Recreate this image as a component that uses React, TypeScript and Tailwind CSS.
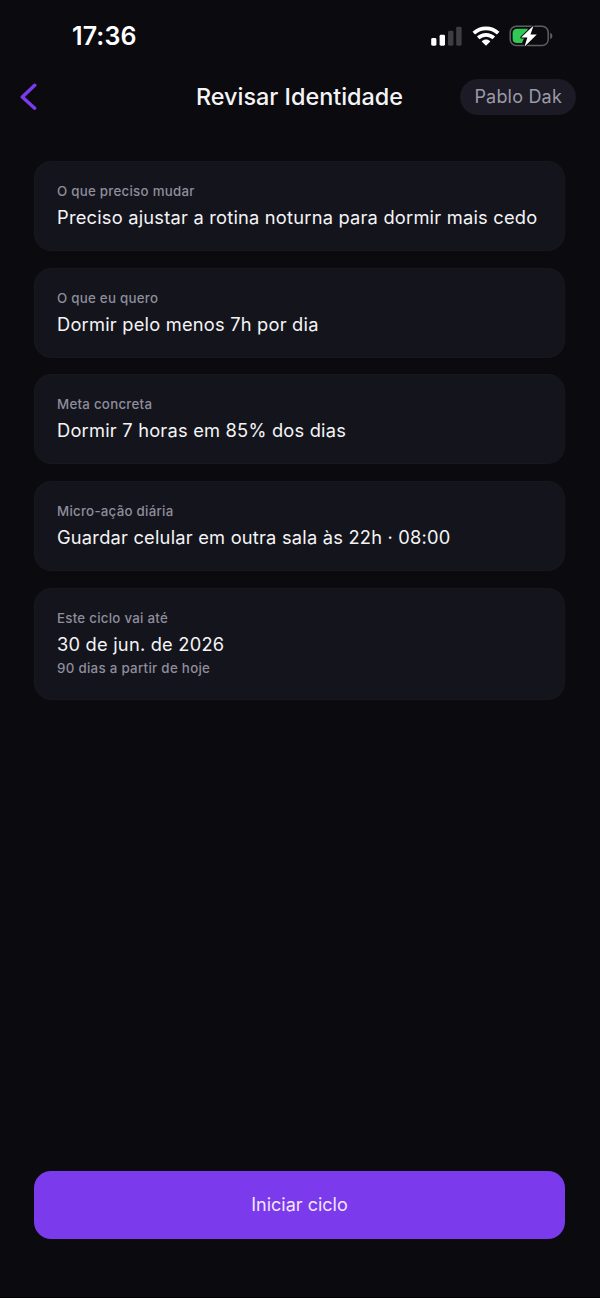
interface ReviewItem {
  label: string;
  value: string;
  hint?: string;
}

const ITEMS: ReviewItem[] = [
  { label: 'O que preciso mudar', value: 'Preciso ajustar a rotina noturna para dormir mais cedo' },
  { label: 'O que eu quero', value: 'Dormir pelo menos 7h por dia' },
  { label: 'Meta concreta', value: 'Dormir 7 horas em 85% dos dias' },
  { label: 'Micro-ação diária', value: 'Guardar celular em outra sala às 22h · 08:00' },
  { label: 'Este ciclo vai até', value: '30 de jun. de 2026', hint: '90 dias a partir de hoje' },
];

function SignalIcon() {
  return (
    <svg width="32" height="20" viewBox="0 0 32 20">
      <rect x="0.2" y="12" width="5.2" height="7.7" rx="1.4" fill="#fff" />
      <rect x="8.6" y="8.8" width="5.4" height="10.9" rx="1.4" fill="#fff" />
      <rect x="17" y="4.8" width="5.4" height="14.9" rx="1.4" fill="#3e3e42" />
      <rect x="25.2" y="0.8" width="5.4" height="18.9" rx="1.4" fill="#3e3e42" />
    </svg>
  );
}

function WifiIcon() {
  return (
    <svg width="28" height="20" viewBox="0 0 28 20" fill="none" stroke="#fff" strokeWidth="3.7">
      <path d="M1.8 7.2C8.7 0.7 19.3 0.7 26.2 7.2" />
      <path d="M6.2 11.9C10.6 7.8 17.4 7.8 21.8 11.9" />
      <path d="M14 19.7L9.7 15.4C12.2 13 15.8 13 18.3 15.4Z" fill="#fff" stroke="none" />
    </svg>
  );
}

function BatteryIcon() {
  return (
    <svg width="44" height="24" viewBox="0 0 44 24">
      <rect x="1.2" y="2.2" width="38" height="19.4" rx="6.2" fill="none" stroke="#606064" strokeWidth="1.5" />
      <path d="M8.2 4.7H19L13 19.1H8.2Q3.6 19.1 3.6 14.5V9.3Q3.6 4.7 8.2 4.7Z" fill="#31c956" />
      <path d="M41.2 8.7C44 9.7 44 14.1 41.2 15.1Z" fill="#606064" />
      <path
        d="M24.6 1.4L12.2 13.5H18.4L15.4 22.8L27.8 10.5H21.5Z"
        fill="#fff"
        stroke="#0a0a0f"
        strokeWidth="1.8"
        strokeLinejoin="round"
        paintOrder="stroke"
      />
    </svg>
  );
}

function StatusBar() {
  return (
    <div className="flex h-[72px] shrink-0 items-center justify-between pr-[47px] pl-[72px]">
      <span className="pt-px text-[25px] font-semibold tracking-[0.1px] text-white">17:36</span>
      <div className="flex items-center">
        <SignalIcon />
        <div className="ml-[9px]"><WifiIcon /></div>
        <div className="ml-[9px]"><BatteryIcon /></div>
      </div>
    </div>
  );
}

function Header() {
  return (
    <header className="grid h-[50px] shrink-0 grid-cols-[1fr_auto_1fr] items-center pr-6 pl-5">
      <button aria-label="Voltar" className="w-5">
        <svg width="18" height="28" viewBox="0 0 18 28" fill="none">
          <path d="M14.7 2.3L2.3 14L14.7 25.2" stroke="#7c3aed" strokeWidth="3.5" strokeLinecap="round" strokeLinejoin="round" />
        </svg>
      </button>
      <h1 className="translate-x-[1.5px] text-[23.4px] font-medium text-[#f4f4f6]">Revisar Identidade</h1>
      <span className="flex h-9 items-center justify-self-end rounded-full bg-[#1b1a25] px-[14px] pb-px text-[18px] tracking-[0.2px] text-[#9b9aa8]">
        Pablo Dak
      </span>
    </header>
  );
}

function ReviewCard({ label, value, hint }: ReviewItem) {
  return (
    <section className="rounded-[17px] border border-[#17171c] bg-[#14141c] px-[22px] pt-[20px] pb-[20px]">
      <p className="text-[13.3px] leading-[19px] font-[450] tracking-[0.26px] text-[#8e8d9b]">{label}</p>
      <p className="mt-[3px] text-[18.3px] leading-[26px] tracking-[0.21px] text-[#f4f4f6]">{value}</p>
      {hint && (
        <p className="mt-[2px] mb-px text-[13.3px] leading-[19px] font-[450] tracking-[0.3px] text-[#8e8d9b]">{hint}</p>
      )}
    </section>
  );
}

export default function App() {
  return (
    <div className="flex h-[1298px] w-[600px] flex-col overflow-hidden border-b border-black bg-[#0a0a0f] font-['Inter',sans-serif]">
      <StatusBar />
      <Header />
      <main className="flex flex-1 flex-col gap-[16.7px] pt-[39px] pr-[35px] pl-[34px]">
        {ITEMS.map((item) => (
          <ReviewCard key={item.label} {...item} />
        ))}
      </main>
      <footer className="pr-[35px] pb-[58px] pl-[34px]">
        <button className="h-[68px] w-full rounded-[17px] bg-[#7c3aed] pb-0.5 text-[18px] text-[#f0e6fc]">Iniciar ciclo</button>
      </footer>
    </div>
  );
}
